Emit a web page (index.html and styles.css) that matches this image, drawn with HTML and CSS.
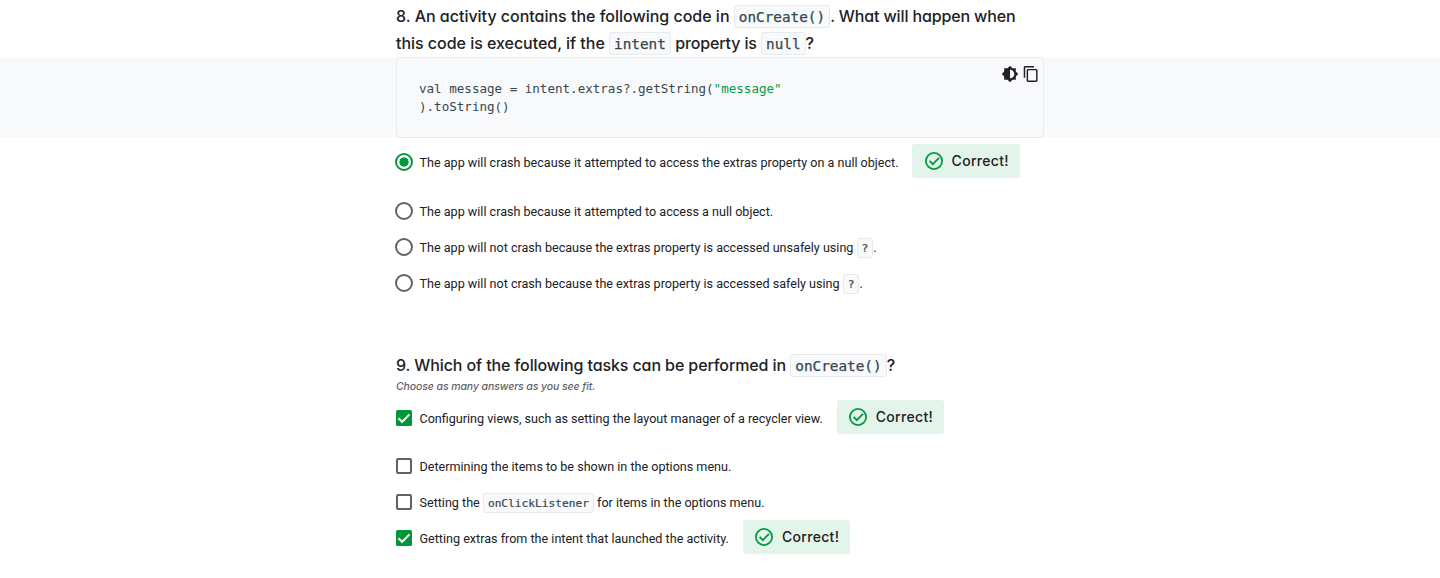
FILE: index.html
```html
<!DOCTYPE html>
<html lang="en">
<head>
<meta charset="utf-8">
<title>Quiz</title>
<link rel="stylesheet" href="styles.css">
</head>
<body>
<svg class="defs" width="0" height="0">
  <symbol id="correct" viewBox="0 0 20 20"><circle cx="10" cy="10" r="8.1" fill="none" stroke="#009a3c" stroke-width="1.8"/><path d="M5.6 9.8l3.2 3.3 6.2-6.3" fill="none" stroke="#009a3c" stroke-width="1.8"/></symbol>
  <symbol id="checked" viewBox="0 0 16 16"><rect width="16" height="16" rx="1.5" fill="#009837"/><path d="M2.4 8.2l3.7 3.6 7.4-7.4" fill="none" stroke="#fff" stroke-width="1.9"/></symbol>
</svg>
<main>
  <section>
    <h2 class="column question"><span class="q8a">8. An activity contains the following code in</span> <code>onCreate()</code><span class="q8b">. What will happen when</span><br><span class="q8c">this code is executed, if the</span> <code>intent</code> <span class="q8d">property is</span> <code>null</code>?</h2>
    <div class="band">
      <div class="column snippet">
        <pre>val message = intent.extras?.getString(<span class="string">"message"</span>
).toString()</pre>
        <div class="tools">
          <svg width="16" height="16" viewBox="1 1 22 22"><path fill="#202124" d="M20 15.31L23.31 12 20 8.69V4h-4.69L12 .69 8.69 4H4v4.69L.69 12 4 15.31V20h4.69L12 23.31 15.31 20H20v-4.69zM12 18V6c3.31 0 6 2.69 6 6s-2.69 6-6 6z"/></svg>
          <svg width="16" height="16" viewBox="1 1 22 22"><path fill="#202124" d="M16 1H4c-1.100 0-2 .9-2 2v14h2V3h12V1zm3 4H8c-1.100 0-2 .9-2 2v14c0 1.100.9 2 2 2h11c1.100 0 2-.9 2-2V7c0-1.100-.9-2-2-2zm0 16H8V7h11v14z"/></svg>
        </div>
      </div>
    </div>
    <div class="column answers radios">
      <div class="answer first"><span class="radio on"></span><span class="label">The app will crash because it attempted to access the extras property on a null object.</span><span class="badge"><svg width="20" height="20"><use href="#correct"/></svg><b>Correct!</b></span></div>
      <div class="answer"><span class="radio"></span><span class="label">The app will crash because it attempted to access a null object.</span></div>
      <div class="answer"><span class="radio"></span><span class="label">The app will not crash because the extras property is accessed unsafely using <code>?</code>.</span></div>
      <div class="answer"><span class="radio"></span><span class="label">The app will not crash because the extras property is accessed safely using <code>?</code>.</span></div>
    </div>
  </section>
  <section class="column second">
    <h2 class="question"><span class="q9">9. Which of the following tasks can be performed in</span> <code>onCreate()</code>?</h2>
    <p class="hint">Choose as many answers as you see fit.</p>
    <div class="answers checks">
      <div class="answer first"><svg class="check" width="16" height="16"><use href="#checked"/></svg><span class="label">Configuring views, such as setting the layout manager of a recycler view.</span><span class="badge"><svg width="20" height="20"><use href="#correct"/></svg><b>Correct!</b></span></div>
      <div class="answer"><span class="check box"></span><span class="label">Determining the items to be shown in the options menu.</span></div>
      <div class="answer"><span class="check box"></span><span class="label">Setting the <code>onClickListener</code> for items in the options menu.</span></div>
      <div class="answer"><svg class="check" width="16" height="16"><use href="#checked"/></svg><span class="label">Getting extras from the intent that launched the activity.</span><span class="badge"><svg width="20" height="20"><use href="#correct"/></svg><b>Correct!</b></span></div>
    </div>
  </section>
</main>
</body>
</html>
```
FILE: styles.css
```css
* { box-sizing: border-box; }
body { margin: 0; background: #fff; color: #202124; font-family: Roboto, sans-serif; overflow: hidden; }
.defs { display: block; }
main { padding-top: 3px; }
.column { width: 648px; margin: 0 auto; }
.question { font: 500 16px/27px Inter, sans-serif; white-space: nowrap; }
h2.question { margin-top: 0; margin-bottom: 0; }
.question, .hint, .badge b { font-feature-settings: "cv11" 1; }
.q8a { letter-spacing: -0.01px; }
.q8b { letter-spacing: -0.13px; }
.q8d { letter-spacing: -0.13px; }
.q9 { letter-spacing: -0.1px; }
.q8c { letter-spacing: -0.03px; }
code { font-family: "DejaVu Sans Mono", monospace; font-size: 14.35px; line-height: 1; font-weight: 400; color: #37474f; background: #f8f9fb; border: 1px solid #e8eaed; border-radius: 3px; padding: 2px 4px; }
.question code { padding: 3px 4px 2px; -webkit-text-stroke: 0.25px #37474f; }
.band { background: #f8f9fb; height: 79px; margin-top: 1px; }
.snippet { height: 81px; border: 1px solid #e8eaed; border-radius: 4px; background: #f8f9fb; display: flex; justify-content: space-between; padding: 22px 4px 0 22px; position: relative; top: -1px; }
pre { margin: 0; font: 12.55px/18px "DejaVu Sans Mono", monospace; color: #37474f; }
.string { color: #009a46; }
.tools { display: flex; gap: 5px; margin-top: -14px; height: 16px; }
.answers { display: flex; flex-direction: column; }
.answer { display: flex; align-items: center; height: 36px; font-size: 12.59px; white-space: nowrap; }
.radios { padding-top: 7px; }
.radio { width: 18px; height: 18px; border: 2px solid #5f6368; border-radius: 50%; margin: 0 6.5px 0 -1px; flex: none; }
.radio.on { border-color: #009a3c; background: radial-gradient(circle, #009a3c 4.3px, transparent 4.9px); }
.radios .first { margin-bottom: 13px; }
.check { width: 16px; height: 16px; margin: 0 7.5px 0 0; flex: none; }
.box { border: 2px solid #5f6368; border-radius: 2px; }
.label code { font-size: 11.2px; padding: 3px 4px 2px; -webkit-text-stroke: 0.2px #37474f; }
.badge { display: flex; align-items: center; height: 34px; width: 108px; margin: -2px 0 0 13px; padding-left: 12px; gap: 8px; border-radius: 3px; background: #e3f4ea; }
.checks .badge { width: 107px; margin-left: 14px; padding-left: 11px; }
.badge b { font-size: 14px; line-height: 20px; font-weight: 500; font-family: Inter, sans-serif; letter-spacing: 0.32px; }
.second { padding-top: 51px; }
.hint { margin: 0; padding-top: 1px; font: italic 500 10.5px/14px Inter, sans-serif; letter-spacing: -0.1px; color: #5f6368; }
.checks { padding-top: 6px; }
.checks .first { margin-bottom: 12px; }
```
